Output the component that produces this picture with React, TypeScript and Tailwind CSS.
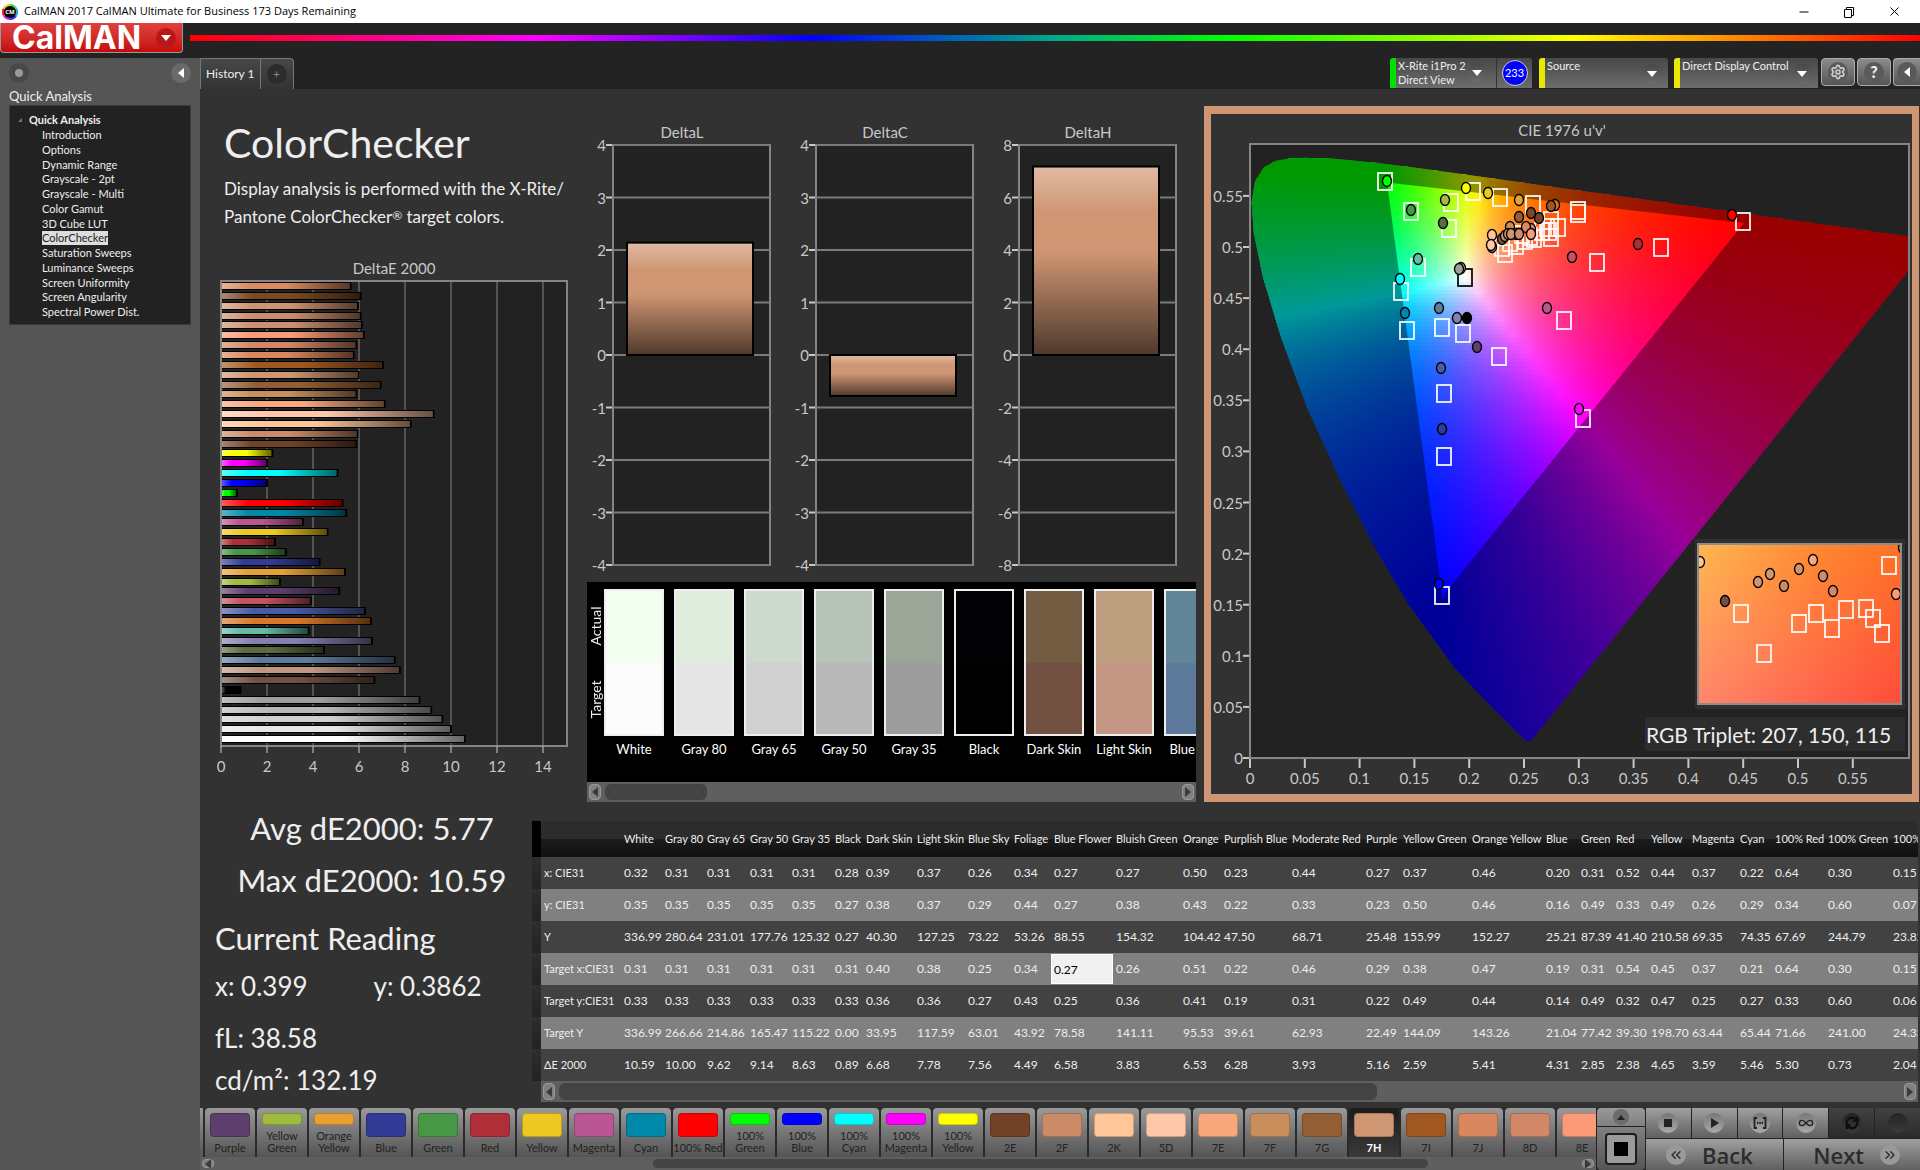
import { useState } from 'react';
import { ChevronsLeft, ChevronsRight, Infinity as InfinityIcon, Minus, RefreshCw, Settings, X } from 'lucide-react';

type Patch = { name: string; label: string[]; color: string; dE: number };

const patches: Patch[] = [
  { name: 'White', label: ['White'], color: '#ffffff', dE: 10.59 },
  { name: 'Gray 80', label: ['Gray 80'], color: '#e6e6e6', dE: 10.0 },
  { name: 'Gray 65', label: ['Gray 65'], color: '#d0d0d0', dE: 9.62 },
  { name: 'Gray 50', label: ['Gray 50'], color: '#b9b9b9', dE: 9.14 },
  { name: 'Gray 35', label: ['Gray 35'], color: '#9d9d9d', dE: 8.63 },
  { name: 'Black', label: ['Black'], color: '#000000', dE: 0.89 },
  { name: 'Dark Skin', label: ['Dark', 'Skin'], color: '#735142', dE: 6.68 },
  { name: 'Light Skin', label: ['Light', 'Skin'], color: '#c29682', dE: 7.78 },
  { name: 'Blue Sky', label: ['Blue', 'Sky'], color: '#5d7b9d', dE: 7.56 },
  { name: 'Foliage', label: ['Foliage'], color: '#5a6c42', dE: 4.49 },
  { name: 'Blue Flower', label: ['Blue', 'Flower'], color: '#8480b0', dE: 6.58 },
  { name: 'Bluish Green', label: ['Bluish', 'Green'], color: '#63bba8', dE: 3.83 },
  { name: 'Orange', label: ['Orange'], color: '#da7828', dE: 6.53 },
  { name: 'Purplish Blue', label: ['Purplish', 'Blue'], color: '#4a5ba5', dE: 6.28 },
  { name: 'Moderate Red', label: ['Moderate', 'Red'], color: '#c45262', dE: 3.93 },
  { name: 'Purple', label: ['Purple'], color: '#5d3e6c', dE: 5.16 },
  { name: 'Yellow Green', label: ['Yellow', 'Green'], color: '#a0bc3f', dE: 2.59 },
  { name: 'Orange Yellow', label: ['Orange', 'Yellow'], color: '#e8a030', dE: 5.41 },
  { name: 'Blue', label: ['Blue'], color: '#323c96', dE: 4.31 },
  { name: 'Green', label: ['Green'], color: '#479747', dE: 2.85 },
  { name: 'Red', label: ['Red'], color: '#af2f38', dE: 2.38 },
  { name: 'Yellow', label: ['Yellow'], color: '#edc820', dE: 4.65 },
  { name: 'Magenta', label: ['Magenta'], color: '#bb5695', dE: 3.59 },
  { name: 'Cyan', label: ['Cyan'], color: '#0088a8', dE: 5.46 },
  { name: '100% Red', label: ['100% Red'], color: '#ff0000', dE: 5.3 },
  { name: '100% Green', label: ['100%', 'Green'], color: '#00ff00', dE: 0.73 },
  { name: '100% Blue', label: ['100%', 'Blue'], color: '#0000ff', dE: 2.04 },
  { name: '100% Cyan', label: ['100%', 'Cyan'], color: '#00ffff', dE: 5.08 },
  { name: '100% Magenta', label: ['100%', 'Magenta'], color: '#ff00ff', dE: 2.04 },
  { name: '100% Yellow', label: ['100%', 'Yellow'], color: '#ffff00', dE: 2.26 },
  { name: '2E', label: ['2E'], color: '#724228', dE: 5.9 },
  { name: '2F', label: ['2F'], color: '#cb8b68', dE: 5.95 },
  { name: '2K', label: ['2K'], color: '#ffc69a', dE: 8.25 },
  { name: '5D', label: ['5D'], color: '#ffc8ab', dE: 9.24 },
  { name: '7E', label: ['7E'], color: '#f8a87c', dE: 7.12 },
  { name: '7F', label: ['7F'], color: '#c88f5c', dE: 5.9 },
  { name: '7G', label: ['7G'], color: '#935e33', dE: 6.95 },
  { name: '7H', label: ['7H'], color: '#cf9673', dE: 6.0 },
  { name: '7I', label: ['7I'], color: '#a05820', dE: 7.05 },
  { name: '7J', label: ['7J'], color: '#d9875e', dE: 5.78 },
  { name: '8D', label: ['8D'], color: '#d18868', dE: 5.9 },
  { name: '8E', label: ['8E'], color: '#fb9a76', dE: 6.22 },
  { name: '8F', label: ['8F'], color: '#cb9070', dE: 6.13 },
  { name: '8G', label: ['8G'], color: '#cc8d6c', dE: 6.08 },
  { name: '8H', label: ['8H'], color: '#ce9470', dE: 5.97 },
  { name: '8I', label: ['8I'], color: '#7a4a25', dE: 6.08 },
  { name: '8J', label: ['8J'], color: '#db8b5f', dE: 5.65 },
];

const workflow = [
  'Introduction', 'Options', 'Dynamic Range', 'Grayscale - 2pt', 'Grayscale - Multi', 'Color Gamut', '3D Cube LUT',
  'ColorChecker', 'Saturation Sweeps', 'Luminance Sweeps', 'Screen Uniformity', 'Screen Angularity', 'Spectral Power Dist.',
];

const comparisons = [
  { name: 'White', actual: '#f3ffee', target: '#fcfcfc' },
  { name: 'Gray 80', actual: '#e0eddd', target: '#e5e5e5' },
  { name: 'Gray 65', actual: '#cddbce', target: '#d0d0d0' },
  { name: 'Gray 50', actual: '#b7c3b6', target: '#b9b9b9' },
  { name: 'Gray 35', actual: '#9ba598', target: '#9d9d9d' },
  { name: 'Black', actual: '#020204', target: '#000000' },
  { name: 'Dark Skin', actual: '#735c42', target: '#735142' },
  { name: 'Light Skin', actual: '#bd9f7f', target: '#c29682' },
  { name: 'Blue Sky', actual: '#628597', target: '#5d7a9d' },
];

const columnWidths = [80, 41, 42, 43, 42, 43, 31, 51, 51, 46, 40, 62, 67, 41, 68, 74, 37, 69, 74, 35, 35, 35, 41, 48, 35, 53, 65, 68];

const readings: [string, string[]][] = [
  ['x: CIE31', '0.32 0.31 0.31 0.31 0.31 0.28 0.39 0.37 0.26 0.34 0.27 0.27 0.50 0.23 0.44 0.27 0.37 0.46 0.20 0.31 0.52 0.44 0.37 0.22 0.64 0.30 0.15'.split(' ')],
  ['y: CIE31', '0.35 0.35 0.35 0.35 0.35 0.27 0.38 0.37 0.29 0.44 0.27 0.38 0.43 0.22 0.33 0.23 0.50 0.46 0.16 0.49 0.33 0.49 0.26 0.29 0.34 0.60 0.07'.split(' ')],
  ['Y', '336.99 280.64 231.01 177.76 125.32 0.27 40.30 127.25 73.22 53.26 88.55 154.32 104.42 47.50 68.71 25.48 155.99 152.27 25.21 87.39 41.40 210.58 69.35 74.35 67.69 244.79 23.82'.split(' ')],
  ['Target x:CIE31', '0.31 0.31 0.31 0.31 0.31 0.31 0.40 0.38 0.25 0.34 0.27 0.26 0.51 0.22 0.46 0.29 0.38 0.47 0.19 0.31 0.54 0.45 0.37 0.21 0.64 0.30 0.15'.split(' ')],
  ['Target y:CIE31', '0.33 0.33 0.33 0.33 0.33 0.33 0.36 0.36 0.27 0.43 0.25 0.36 0.41 0.19 0.31 0.22 0.49 0.44 0.14 0.49 0.32 0.47 0.25 0.27 0.33 0.60 0.06'.split(' ')],
  ['Target Y', '336.99 266.66 214.86 165.47 115.22 0.00 33.95 117.59 63.01 43.92 78.58 141.11 95.53 39.61 62.93 22.49 144.09 143.26 21.04 77.42 39.30 198.70 63.44 65.44 71.66 241.00 24.33'.split(' ')],
  ['ΔE 2000', '10.59 10.00 9.62 9.14 8.63 0.89 6.68 7.78 7.56 4.49 6.58 3.83 6.53 6.28 3.93 5.16 2.59 5.41 4.31 2.85 2.38 4.65 3.59 5.46 5.30 0.73 2.04'.split(' ')],
];

// CIE 1931 xy of the spectral locus, 400nm to 700nm
const locus = [
  [0.1733, 0.0048], [0.1714, 0.0051], [0.1689, 0.0069], [0.1644, 0.0109], [0.1566, 0.0177], [0.144, 0.0297], [0.1241, 0.0578], [0.1096, 0.0868],
  [0.0913, 0.1327], [0.0687, 0.2007], [0.0454, 0.295], [0.0235, 0.4127], [0.0082, 0.5384], [0.0039, 0.6548], [0.0139, 0.7502],
  [0.0389, 0.812], [0.0743, 0.8338], [0.1142, 0.8262], [0.1547, 0.8059], [0.2296, 0.7543], [0.3016, 0.6923], [0.3731, 0.6245],
  [0.4441, 0.5547], [0.5125, 0.4866], [0.5752, 0.4242], [0.627, 0.3725], [0.6658, 0.334], [0.6915, 0.3083], [0.719, 0.2809], [0.7347, 0.2653],
];

const ORIGIN_X = 39;
const ORIGIN_Y = 644;
const SCALE_U = 1096;
const SCALE_V = 1023;

const toPlot = ([x, y]: number[]) => {
  const d = -2 * x + 12 * y + 3;
  return [ORIGIN_X + ((4 * x) / d) * SCALE_U, ORIGIN_Y - ((9 * y) / d) * SCALE_V];
};

const toPath = (points: number[][]) => 'M' + points.map(toPlot).map((p) => `${p[0].toFixed(1)} ${p[1].toFixed(1)}`).join('L') + 'Z';

const colorAt = (px: number, py: number) => {
  const u = (px - ORIGIN_X) / SCALE_U;
  const v = Math.max((ORIGIN_Y - py) / SCALE_V, 0.005);
  const X = (9 * u) / (4 * v);
  const Z = (12 - 3 * u - 20 * v) / (4 * v);
  const rgb = [
    3.2406 * X - 1.5372 - 0.4986 * Z,
    -0.9689 * X + 1.8758 + 0.0415 * Z,
    0.0557 * X - 0.204 + 1.057 * Z,
  ].map((c) => Math.max(c, 0));
  const max = Math.max(...rgb) || 1;
  return `rgb(${rgb.map((c) => Math.round((c / max) * 255)).join(',')})`;
};

const ROW = 4;
const fieldRows = Array.from({ length: 154 }, (_, i) => 28 + i * ROW);
const fieldStops = Array.from({ length: 56 }, (_, i) => i * 12);

const locusPath = toPath(locus);
const gamutPath = toPath([[0.64, 0.33], [0.3, 0.6], [0.15, 0.06]]);

const measured: [number, number, string][] = [
  [176, 67, '#00ff00'], [200, 96, '#479747'], [234, 86, '#a0bc3f'], [255, 74, '#ffff00'], [277, 79, '#edc820'], [308, 86, '#e8a030'],
  [344, 91, '#da7828'], [340, 92, '#a05820'], [328, 104, '#724228'], [320, 99, '#7a4a25'], [308, 103, '#935e33'], [232, 109, '#596c42'],
  [299, 113, '#c88f5c'], [320, 115, '#d38a6a'], [315, 113, '#da8a60'], [320, 120, '#fb9a76'], [281, 121, '#ffc69a'], [291, 125, '#735142'],
  [294, 122, '#c59682'], [297, 120, '#cd9573'], [305, 120, '#cb8b68'], [300, 120, '#cf9673'], [308, 120, '#d18a6a'], [281, 133, '#c29682'],
  [280, 131, '#ffc8ab'], [250, 154, '#9d9d9d'], [248, 155, '#9d9d9d'], [207, 145, '#63bba8'], [189, 165, '#00ffff'], [194, 199, '#0088a8'],
  [228, 194, '#5d7b9d'], [246, 204, '#8480b0'], [256, 204, '#000000'], [266, 233, '#5d3e6c'], [230, 254, '#4a5ba5'], [231, 315, '#303c97'],
  [336, 194, '#bb5695'], [368, 295, '#ff00ff'], [361, 143, '#c45262'], [427, 130, '#af2f38'], [521, 101, '#ff0000'], [228, 470, '#0000ff'],
];

const targets = [
  [174, 67], [200, 97], [240, 88], [262, 77], [289, 83], [322, 90], [367, 96], [367, 99], [238, 114], [347, 113], [340, 106], [338, 117],
  [340, 123], [331, 117], [336, 113], [294, 139], [305, 131], [314, 126], [319, 122], [323, 124], [291, 133], [299, 128], [311, 120], [207, 153], [190, 177],
  [196, 216], [231, 213], [252, 219], [288, 242], [233, 279], [233, 342], [231, 481], [353, 206], [372, 304], [386, 148], [450, 133], [532, 107],
];

const insetMeasured: [number, number, string][] = [
  [489, 448, '#ffc69a'], [514, 487, '#735142'], [547, 468, '#cd9573'], [559, 460, '#cf9673'], [573, 472, '#cb8b68'], [588, 455, '#ce9470'],
  [602, 446, '#f8a87c'], [612, 462, '#cc8d6c'], [622, 477, '#d18868'], [685, 480, '#fb9a76'], [692, 434, '#c88f5c'],
];

const insetTargets = [
  [530, 499], [553, 539], [588, 509], [605, 499], [621, 514], [635, 495], [655, 494], [662, 504], [671, 519], [678, 451],
];

function DeltaEChart() {
  return (
    <svg viewBox="0 0 387 536" className="block w-full" role="img" aria-label="DeltaE 2000">
      <defs>
        <linearGradient id="barShade">
          <stop offset="0" stopColor="#fff" stopOpacity="0.35" />
          <stop offset="0.22" stopColor="#fff" stopOpacity="0" />
          <stop offset="0.5" stopColor="#000" stopOpacity="0" />
          <stop offset="1" stopColor="#000" stopOpacity="0.6" />
        </linearGradient>
      </defs>
      <text x="194" y="19" textAnchor="middle" fontSize="15" fill="#c8c8c8">DeltaE 2000</text>
      <rect x="21" y="26" width="346" height="465" fill="#222" stroke="#858585" strokeWidth="2" />
      {[2, 4, 6, 8, 10, 12, 14].map((n) => (
        <path key={n} d={`M${21 + n * 23} 26V491`} stroke="#858585" strokeWidth="1" />
      ))}
      {[...patches].reverse().map((p, i) => {
        const y = Math.round(27 + i * 9.85);
        return (
          <g key={p.name}>
            <rect x="22" y={y} width={p.dE * 23.1 - 1} height="8" fill="#000" />
            <rect x="22" y={y + 1} width={p.dE * 23.1 - 3} height="6" fill={p.color} />
            <rect x="22" y={y + 1} width={p.dE * 23.1 - 3} height="6" fill="url(#barShade)" />
          </g>
        );
      })}
      {[0, 2, 4, 6, 8, 10, 12, 14].map((n) => (
        <g key={n}>
          <path d={`M${21 + n * 23} 491v7`} stroke="#c8c8c8" />
          <text x={21 + n * 23} y="517" textAnchor="middle" fontSize="15" fill="#c8c8c8">{n}</text>
        </g>
      ))}
    </svg>
  );
}

function DeltaChart({ title, max, value, color }: { title: string; max: number; value: number; color: string }) {
  const zero = 249;
  const height = Math.abs(value / max) * 210;
  return (
    <svg viewBox="0 0 203 476" className="block w-full" role="img" aria-label={title}>
      <defs>
        <linearGradient id={title} x2="0" y2="1">
          <stop offset="0" stopColor="#fff" stopOpacity="0.35" />
          <stop offset="0.24" stopColor="#fff" stopOpacity="0" />
          <stop offset="0.45" stopColor="#000" stopOpacity="0" />
          <stop offset="1" stopColor="#000" stopOpacity="0.62" />
        </linearGradient>
      </defs>
      <text x="95" y="32" textAnchor="middle" fontSize="15" fill="#c8c8c8">{title}</text>
      <rect x="26" y="39" width="157" height="420" fill="#222" stroke="#858585" strokeWidth="2" />
      {[4, 3, 2, 1, 0, -1, -2, -3, -4].map((n, i) => (
        <g key={n}>
          <path d={`M26 ${39 + i * 52.5}h157`} stroke="#7a7a7a" strokeWidth="2" />
          <path d={`M19 ${39 + i * 52.5}h6`} stroke="#c8c8c8" strokeWidth="2" />
          <text x="19" y={45 + i * 52.5} textAnchor="end" fontSize="15" fill="#c8c8c8">{(n * max) / 4}</text>
        </g>
      ))}
      <rect x="40" y={value > 0 ? zero - height : zero} width="126" height={height} fill={color} />
      <rect x="40" y={value > 0 ? zero - height : zero} width="126" height={height} fill={`url(#${title})`} stroke="#000" strokeWidth="2" />
    </svg>
  );
}

function Square({ x, y, stroke = '#fff' }: { x: number; y: number; stroke?: string }) {
  return <rect x={x - 7} y={y - 8} width="14" height="17" fill="none" stroke={stroke} strokeWidth="1.7" />;
}

function CieChart() {
  return (
    <svg viewBox="0 0 701 680" className="block w-full" role="img" aria-label="CIE 1976 u'v'">
      <defs>
        {fieldRows.map((y) => (
          <linearGradient key={y} id={`row${y}`} gradientUnits="userSpaceOnUse" x1="39" x2="699">
            {fieldStops.map((x) => (
              <stop key={x} offset={x / 660} stopColor={colorAt(ORIGIN_X + x, y + ROW / 2)} />
            ))}
          </linearGradient>
        ))}
        <clipPath id="plotArea"><rect x="39" y="30" width="658" height="614" /></clipPath>
        <clipPath id="locusArea"><path d={locusPath} /></clipPath>
        <clipPath id="insetArea"><rect x="487" y="430" width="203" height="160" /></clipPath>
        <linearGradient id="insetTop"><stop stopColor="#ffb850" /><stop offset="0.6" stopColor="#ff8830" /><stop offset="1" stopColor="#ff7226" /></linearGradient>
        <linearGradient id="insetBottom"><stop stopColor="#ff866c" /><stop offset="1" stopColor="#ff4c3a" /></linearGradient>
        <linearGradient id="insetFade" x2="0" y2="1"><stop stopColor="#000" /><stop offset="1" stopColor="#fff" /></linearGradient>
        <mask id="insetMask"><rect x="487" y="430" width="203" height="160" fill="url(#insetFade)" /></mask>
      </defs>

      <text x="351" y="22" textAnchor="middle" fontSize="15" fill="#c8c8c8">CIE 1976 u'v'</text>
      <rect x="39" y="30" width="659" height="614" fill="#222" stroke="#858585" strokeWidth="2" />
      <g clipPath="url(#plotArea)">
        <g clipPath="url(#locusArea)">
          {fieldRows.map((y) => (
            <rect key={y} x="39" y={y} width="660" height={ROW + 1} fill={`url(#row${y})`} />
          ))}
          <path d={`M0 0H760V680H0Z${gamutPath}`} fillRule="evenodd" fill="#000" fillOpacity="0.4" />
        </g>
      </g>

      {Array.from({ length: 12 }, (_, i) => (
        <g key={i}>
          <path d={`M${39 + i * 54.8} 645v9`} stroke="#c8c8c8" strokeWidth="2" />
          <text x={39 + i * 54.8} y="670" textAnchor="middle" fontSize="15" fill="#c8c8c8">{i * 5 / 100}</text>
          <path d={`M32 ${644 - i * 51.1}h6`} stroke="#c8c8c8" strokeWidth="2" />
          <text x="32" y={650 - i * 51.1} textAnchor="end" fontSize="15" fill="#c8c8c8">{i * 5 / 100}</text>
        </g>
      ))}

      {targets.map(([x, y], i) => <Square key={i} x={x} y={y} />)}
      <Square x={254} y={163} stroke="#000" />
      {measured.map(([x, y, fill], i) => (
        <ellipse key={i} cx={x} cy={y} rx="4.5" ry="5.5" fill={fill} stroke="#000" strokeWidth="1.4" />
      ))}

      <rect x="484" y="425" width="210" height="170" fill="#303030" />
      <g clipPath="url(#insetArea)">
        <rect x="487" y="430" width="203" height="160" fill="url(#insetTop)" />
        <rect x="487" y="430" width="203" height="160" fill="url(#insetBottom)" mask="url(#insetMask)" />
        {insetTargets.map(([x, y], i) => <Square key={i} x={x} y={y} />)}
        {insetMeasured.map(([x, y, fill], i) => (
          <ellipse key={i} cx={x} cy={y} rx="4.5" ry="5.5" fill={fill} stroke="#000" strokeWidth="1.4" />
        ))}
      </g>
      <rect x="487" y="430" width="203" height="160" fill="none" stroke="#8c8c8c" strokeWidth="2" />

      <rect x="434" y="603" width="260" height="34" fill="#2d2d2d" />
      <text x="435" y="629" fontSize="21" fill="#eee">RGB Triplet: 207, 150, 115</text>
    </svg>
  );
}

function Triangle({ className = '' }: { className?: string }) {
  return (
    <svg viewBox="0 0 10 6" className={`h-[6px] w-[10px] fill-white ${className}`}>
      <path d="M0 0h10L5 6z" />
    </svg>
  );
}

function DropArrow() {
  return (
    <span className="flex size-5 shrink-0 items-center justify-center rounded-full bg-linear-to-b from-[#484848] to-[#6c6c6c]">
      <Triangle />
    </span>
  );
}

function ScrollBar({ name, thumb, className }: { name: string; thumb: string; className: string }) {
  return (
    <div className={`flex shrink-0 items-stretch gap-1 bg-[#5f5f5f] p-[2px] ${className}`}>
      <button type="button" aria-label={`Scroll ${name} left`} className="flex w-3 shrink-0 items-center justify-center rounded-sm border border-[#999] bg-[#808080]">
        <svg viewBox="0 0 6 10" className="h-[10px] w-[6px] fill-[#3a3a3a]"><path d="M6 0v10L0 5z" /></svg>
      </button>
      <div className="flex min-w-0 flex-1">
        <div className={`rounded-md bg-[#444] ${thumb}`} />
      </div>
      <button type="button" aria-label={`Scroll ${name} right`} className="flex w-3 shrink-0 items-center justify-center rounded-sm border border-[#999] bg-[#808080]">
        <svg viewBox="0 0 6 10" className="h-[10px] w-[6px] fill-[#3a3a3a]"><path d="M0 0v10l6-5z" /></svg>
      </button>
    </div>
  );
}

function TitleBar() {
  return (
    <div className="flex h-[23px] items-center bg-white pl-[2px] font-['Open_Sans',sans-serif] text-[11px] text-black">
      <svg viewBox="0 0 16 16" className="mr-[6px] size-4">
        <path d="M8 0a8 8 0 0 1 7 4L8 8z" fill="#4d4" />
        <path d="M15 4a8 8 0 0 1 0 8L8 8z" fill="#2ad" />
        <path d="M15 12a8 8 0 0 1-7 4V8z" fill="#33f" />
        <path d="M8 16a8 8 0 0 1-7-4l7-4z" fill="#c2e" />
        <path d="M1 12a8 8 0 0 1 0-8l7 4z" fill="#e22" />
        <path d="M1 4a8 8 0 0 1 7-4v8z" fill="#ec2" />
        <circle cx="8" cy="8" r="6" fill="#000" />
        <text x="8" y="10" textAnchor="middle" fontSize="6" fontWeight="700" fill="#fff">CM</text>
      </svg>
      <span className="flex-1">CalMAN 2017 CalMAN Ultimate for Business 173 Days Remaining</span>
      <div className="flex items-center gap-8 pr-[18px]">
        <button type="button" aria-label="Minimize"><Minus className="size-[14px]" strokeWidth={1.8} /></button>
        <button type="button" aria-label="Restore">
          <svg viewBox="0 0 12 12" className="size-3 fill-none stroke-black"><path d="M1.500 3.500h7v8h-7zM3.500 3.500v-2h7v8h-2" /></svg>
        </button>
        <button type="button" aria-label="Close"><X className="size-[15px]" strokeWidth={1.6} /></button>
      </div>
    </div>
  );
}

function DeviceBar() {
  return (
    <div className="flex h-[30px] items-stretch text-[11px] leading-[14px] text-[#eee]">
      <div className="mr-[7px] flex w-[142px] rounded-t-[3px] border-l-[6px] border-[#00e000] bg-linear-to-b from-[#484848] to-[#6c6c6c]">
        <button type="button" className="flex w-[101px] items-center justify-between border-r border-[#333] pr-[9px] pl-[2px] text-left">
          <span className="whitespace-nowrap">X-Rite i1Pro 2<br />Direct View</span>
          <DropArrow />
        </button>
        <span className="m-auto flex size-[26px] items-center justify-center rounded-full border border-[#ccc] bg-[#0000ff] text-[11px] text-white">233</span>
      </div>
      <div className="relative mr-[6px] w-[129px] rounded-t-[3px] border-l-[6px] border-[#e8e800] bg-linear-to-b from-[#484848] to-[#6c6c6c]">
        <select aria-label="Source" className="h-full w-full appearance-none pb-[14px] pl-[2px] outline-none">
          <option>Source</option>
        </select>
        <span className="pointer-events-none absolute top-[6px] right-[6px]"><DropArrow /></span>
      </div>
      <div className="relative mr-[3px] w-[144px] rounded-t-[3px] border-l-[6px] border-[#e8e800] bg-linear-to-b from-[#484848] to-[#6c6c6c]">
        <select aria-label="Display control" className="h-full w-full appearance-none pb-[14px] pl-[2px] outline-none">
          <option>Direct Display Control</option>
        </select>
        <span className="pointer-events-none absolute top-[6px] right-[6px]"><DropArrow /></span>
      </div>
      <div className="flex h-7 gap-[2px]">
        <button type="button" aria-label="Settings" className="flex w-[34px] items-center justify-center rounded-sm border border-[#aaa] bg-linear-to-b from-[#8c8c8c] to-[#555]">
          <span className="flex size-5 items-center justify-center rounded-full bg-[#5a5a5a]"><Settings className="size-4 text-[#ccc]" strokeWidth={2.5} /></span>
        </button>
        <button type="button" aria-label="Help" className="flex w-[34px] items-center justify-center rounded-sm border border-[#aaa] bg-linear-to-b from-[#8c8c8c] to-[#555]">
          <span className="flex size-5 items-center justify-center rounded-full bg-[#5a5a5a] text-[16px] font-black">?</span>
        </button>
        <button type="button" aria-label="Collapse" className="flex w-[27px] items-center justify-center rounded-l-sm border border-r-0 border-[#aaa] bg-linear-to-b from-[#8c8c8c] to-[#555]">
          <span className="flex size-5 items-center justify-center rounded-full bg-[#5a5a5a]"><Triangle className="rotate-90" /></span>
        </button>
      </div>
    </div>
  );
}

function ReadingsTable() {
  const tableWidth = columnWidths.reduce((a, b) => a + b, 0);
  return (
    <div className="flex min-w-0 flex-1">
      <div className="flex w-[9px] shrink-0 flex-col">
        <div className="h-9 bg-black" />
        {readings.map(([label]) => <div key={label} className="h-8 bg-linear-to-b from-[#2e2e2e] to-[#222]" />)}
      </div>
      <div className="min-w-0 flex-1">
        <div className="overflow-hidden">
          <table className="table-fixed border-collapse text-left text-[11px] whitespace-nowrap text-[#eee]" style={{ width: tableWidth }}>
            <colgroup>
              {columnWidths.map((w, i) => <col key={i} style={{ width: w }} />)}
            </colgroup>
            <thead>
              <tr className="h-9 bg-linear-to-b from-[#2c2c2c] from-50% via-[#1c1c1c] via-50% to-[#101010]">
                <th />
                {patches.slice(0, 27).map((p) => <th key={p.name} className="p-0 pl-[3px] font-normal">{p.name}</th>)}
              </tr>
            </thead>
            <tbody>
              {readings.map(([label, values]) => (
                <tr key={label} className="h-8 odd:bg-[#424242] even:bg-[#808080]">
                  <th className="p-0 pl-[3px] font-normal">{label}</th>
                  {values.map((v, i) =>
                    label === 'Target x:CIE31' && i === 10 ? (
                      <td key={i} className="p-0 text-[12px]">
                        <input aria-label="Blue Flower target x" defaultValue={v} className="block h-[30px] w-full border border-white bg-[#f0f0f0] pl-[2px] text-black outline-none" />
                      </td>
                    ) : (
                      <td key={i} className="p-0 pl-[3px] text-[12px]">{v}</td>
                    )
                  )}
                </tr>
              ))}
            </tbody>
          </table>
        </div>
        <ScrollBar name="readings" thumb="w-[61%]" className="h-[21px]" />
      </div>
    </div>
  );
}

function PatchBar() {
  const [selected, setSelected] = useState('7H');
  return (
    <div className="min-w-0 flex-1">
      <div className="flex h-[49px] justify-start gap-[2px] overflow-hidden bg-[#2a2a2a]">
        <div className="w-[3px] shrink-0 bg-linear-to-b from-[#9a9a9a] to-[#555]" />
        {patches.slice(15, 42).map((p) => (
          <button
            key={p.name}
            type="button"
            onClick={() => setSelected(p.name)}
            className={
              'flex w-[50px] shrink-0 flex-col items-center justify-between rounded-t-[4px] pt-[5px] pb-[3px] text-[11px] leading-[12px] whitespace-nowrap ' +
              (selected === p.name ? 'bg-linear-to-b from-[#1c1c1c] to-[#3a3a3a] font-bold text-white' : 'bg-linear-to-b from-[#9a9a9a] to-[#555] text-[#222]')
            }
          >
            <span className={'w-10 rounded-[4px] border border-black/20 ' + (p.label.length > 1 ? 'h-3' : 'h-6')} style={{ backgroundColor: p.color }} />
            <span>{p.label.map((line) => <span key={line} className="block">{line}</span>)}</span>
          </button>
        ))}
      </div>
      <ScrollBar name="patches" thumb="ml-[32%] w-[57%]" className="h-[13px]" />
    </div>
  );
}

function TransportButton({ label, disabled, children }: { label: string; disabled?: boolean; children?: React.ReactNode }) {
  return (
    <button
      type="button"
      aria-label={label}
      disabled={disabled}
      className={'flex items-center justify-center ' + (disabled ? 'bg-linear-to-b from-[#424242] to-[#2a2a2a]' : 'bg-linear-to-b from-[#a0a0a0] to-[#606060]')}
    >
      <span className={'flex size-5 items-center justify-center rounded-full ' + (disabled ? 'bg-linear-to-b from-[#242424] to-[#3a3a3a]' : 'bg-linear-to-b from-[#777] to-[#aaa] text-[#222]')}>{children}</span>
    </button>
  );
}

function Transport() {
  return (
    <div className="flex w-[323px] shrink-0 gap-px">
      <div className="flex w-12 flex-col gap-px">
        <button type="button" aria-label="Expand" className="flex h-[18px] items-center justify-center rounded-t-sm bg-linear-to-b from-[#999] to-[#808080]">
          <span className="flex size-4 items-center justify-center rounded-full bg-[#6c6c6c]">
            <svg viewBox="0 0 8 5" className="h-[5px] w-2 fill-[#222]"><path d="M4 0l4 5H0z" /></svg>
          </span>
        </button>
        <button type="button" aria-label="Pattern window" className="flex flex-1 items-center justify-center rounded-b-sm bg-linear-to-b from-[#808080] to-[#555]">
          <span className="flex size-8 items-center justify-center rounded-[4px] border-2 border-[#1c1c1c] bg-[#9a9a9a]">
            <span className="size-[14px] bg-black" />
          </span>
        </button>
      </div>
      <div className="flex flex-1 flex-col gap-px">
        <div className="grid h-[30px] grid-cols-6 gap-px">
          <TransportButton label="Stop"><span className="size-2 bg-[#222]" /></TransportButton>
          <TransportButton label="Play"><svg viewBox="0 0 8 10" className="ml-[2px] h-[10px] w-2 fill-[#222]"><path d="M0 0l8 5-8 5z" /></svg></TransportButton>
          <TransportButton label="Read series">
            <svg viewBox="0 0 14 12" className="h-3 w-[14px] fill-none stroke-[#222]" strokeWidth="1.800"><path d="M4 1H1.500v10H4M10 1h2.500v10H10M4 6h1.500M6.300 6h1.500M8.600 6h1.500" /></svg>
          </TransportButton>
          <TransportButton label="Read continuously"><InfinityIcon className="size-4" strokeWidth={2} /></TransportButton>
          <TransportButton label="Refresh" disabled><RefreshCw className="size-[14px] text-[#0e0e0e]" strokeWidth={4} /></TransportButton>
          <TransportButton label="Record" disabled />
        </div>
        <div className="grid flex-1 grid-cols-2 gap-px font-['Open_Sans',sans-serif] text-[22px] leading-none font-semibold text-[#2c2c2c]">
          <button type="button" className="flex items-center gap-4 bg-linear-to-b from-[#a0a0a0] to-[#606060] pl-5">
            <span className="flex size-5 items-center justify-center rounded-full bg-[#999]"><ChevronsLeft className="size-4" strokeWidth={2} /></span>
            Back
          </button>
          <button type="button" className="flex items-center justify-end gap-4 bg-linear-to-b from-[#a0a0a0] to-[#606060] pr-5">
            Next
            <span className="flex size-5 items-center justify-center rounded-full bg-[#999]"><ChevronsRight className="size-4" strokeWidth={2} /></span>
          </button>
        </div>
      </div>
    </div>
  );
}

export default function App() {
  return (
    <div className="flex min-h-screen flex-col overflow-hidden bg-[#232323] font-['Lato',sans-serif] text-[#eee]">
      <TitleBar />

      <header className="flex h-[35px] items-start gap-[7px]">
        <button type="button" className="flex h-[30px] w-[183px] items-center justify-between rounded-b-[4px] border border-t-0 border-[#999] bg-linear-to-b from-[#e04040] to-[#c40808] pr-[6px] pl-[11px] font-['Inter',sans-serif] text-[32px] leading-none font-bold text-white">
          CalMAN
          <span className="flex size-5 items-center justify-center rounded-full bg-[#b81818]"><Triangle /></span>
        </button>
        <div className="mt-3 h-[6px] flex-1 bg-[linear-gradient(to_right,#f00,#f0f_20%,#00f_36%,#0a8_50%,#0f0_60%,#ff0_80%,#f00)]" />
      </header>

      <div className="flex flex-1">
        <aside className="w-[200px] shrink-0 bg-[#555] px-[9px]">
          <div className="flex h-[29px] items-center justify-between">
            <span className="flex size-5 items-center justify-center rounded-full bg-[#484848]"><span className="size-2 rounded-full bg-[#999]" /></span>
            <button type="button" aria-label="Hide workflow" className="flex size-5 items-center justify-center rounded-full bg-[#6a6a6a]"><Triangle className="rotate-90" /></button>
          </div>
          <h2 className="h-[18px] text-[13px] leading-[18px]">Quick Analysis</h2>
          <nav className="h-[220px] border border-[#3a3a3a] bg-[#222] text-[11px]">
            <p className="mt-[6px] flex h-4 items-center gap-[7px] pl-2 leading-4 font-bold">
              <svg viewBox="0 0 4 4" className="size-1 fill-[#777]"><path d="M4 0v4H0z" /></svg>
              Quick Analysis
            </p>
            <ul className="flex h-[191px] flex-col justify-between pl-8 leading-[14px]">
              {workflow.map((item) => (
                <li key={item}>
                  <a href="#" className={item === 'ColorChecker' ? 'inline-block bg-[#ddd] text-[#222]' : 'inline-block'}>{item}</a>
                </li>
              ))}
            </ul>
          </nav>
        </aside>

        <div className="flex min-w-0 flex-1 flex-col">
          <div className="flex h-[31px] items-start justify-between">
            <div className="flex h-[31px] rounded-tr-[4px] border border-b-0 border-[#777] bg-linear-to-b from-[#484848] to-[#333] text-[12px]">
              <button type="button" className="border-r border-[#777] px-[5px]">History 1</button>
              <button type="button" aria-label="Add history" className="flex w-8 items-center justify-center">
                <span className="flex size-5 items-center justify-center rounded-full bg-[#2c2c2c] text-[#888]">+</span>
              </button>
            </div>
            <DeviceBar />
          </div>

          <main className="flex flex-1 flex-col bg-[#323232]">
            <div className="grid grid-cols-[387fr_609fr_723fr] pt-[17px] pr-px">
              <section className="min-w-0">
                <h1 className="mt-[9px] pl-6 text-[41px] leading-[56px]">ColorChecker</h1>
                <p className="mt-1 mb-6 pl-6 text-[17px] leading-7 whitespace-nowrap">
                  Display analysis is performed with the X-Rite/<br />Pantone ColorChecker<span className="align-[3px] text-[12px] leading-none">®</span> target colors.
                </p>
                <DeltaEChart />
              </section>

              <section className="flex min-w-0 flex-col">
                <div className="grid grid-cols-3">
                  <DeltaChart title="DeltaL" max={4} value={2.14} color="#cf9673" />
                  <DeltaChart title="DeltaC" max={4} value={-0.78} color="#cf9673" />
                  <DeltaChart title="DeltaH" max={8} value={7.18} color="#cf9673" />
                </div>
                <div className="flex h-[220px] flex-col bg-black">
                  <div className="flex min-h-0 flex-1 overflow-hidden pt-[7px]">
                    <div className="flex h-[147px] w-[17px] shrink-0 flex-col text-[14px] leading-[17px]">
                      <span className="flex-1 rotate-180 text-center [writing-mode:vertical-rl]">Actual</span>
                      <span className="flex-1 rotate-180 text-center [writing-mode:vertical-rl]">Target</span>
                    </div>
                    <div className="flex min-w-0 gap-[10px] overflow-hidden">
                      {comparisons.map((c) => (
                        <figure key={c.name} className="w-[60px] shrink-0">
                          <div className="flex h-[147px] flex-col border-2 border-[#eee]">
                            <div className="flex-1" style={{ backgroundColor: c.actual }} />
                            <div className="flex-1" style={{ backgroundColor: c.target }} />
                          </div>
                          <figcaption className="mt-1 text-center text-[13px] leading-[18px] whitespace-nowrap text-white">{c.name}</figcaption>
                        </figure>
                      ))}
                    </div>
                  </div>
                  <ScrollBar name="comparison" thumb="w-[102px]" className="h-5" />
                </div>
              </section>

              <section className="ml-2 min-w-0 self-start border-x-[7px] border-y-8 border-[#cf9673] bg-[#323232]">
                <CieChart />
              </section>
            </div>

            <div className="flex pr-[2px]">
              <section className="w-[332px] shrink-0 text-[26px] leading-9">
                <div className="pl-3 text-center text-[31px] leading-[52px]">
                  <p>Avg dE2000: 5.77</p>
                  <p>Max dE2000: 10.59</p>
                </div>
                <div className="pl-[15px]">
                  <h2 className="mt-[10px] text-[31px] leading-[44px]">Current Reading</h2>
                  <div className="mt-2 grid grid-cols-2">
                    <p>x: 0.399</p>
                    <p>y: 0.3862</p>
                  </div>
                  <p className="mt-4">fL: 38.58</p>
                  <p className="mt-[6px]">cd/m²: 132.19</p>
                </div>
              </section>
              <div className="flex min-w-0 flex-1 pt-[19px]">
                <ReadingsTable />
              </div>
            </div>
          </main>

          <footer className="flex h-[62px] gap-px">
            <PatchBar />
            <Transport />
          </footer>
        </div>
      </div>
    </div>
  );
}
